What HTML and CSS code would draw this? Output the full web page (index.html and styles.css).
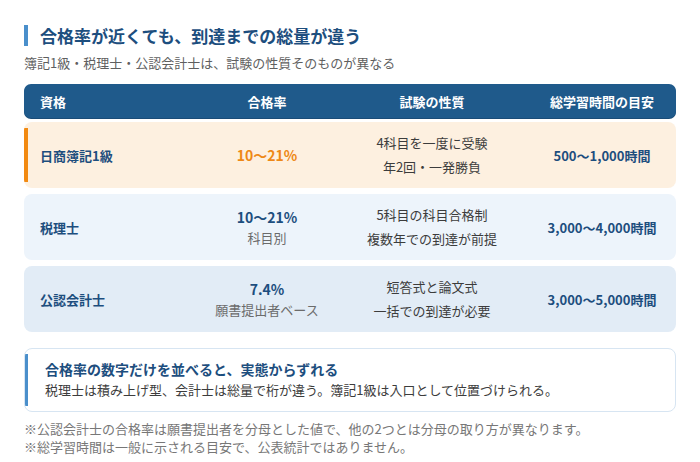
FILE: index.html
```html
<!DOCTYPE html>
<html lang="ja">
<head>
<meta charset="utf-8">
<link rel="stylesheet" href="styles.css">
</head>
<body>
<div class="page">
  <h1 class="title">合格率が近くても、到達までの総量が違う</h1>
  <p class="subtitle">簿記1級・税理士・公認会計士は、試験の性質そのものが異なる</p>

  <div class="table">
    <div class="row head">
      <div class="c1">資格</div>
      <div class="cc">合格率</div>
      <div class="cc">試験の性質</div>
      <div class="cc">総学習時間の目安</div>
    </div>
    <div class="row r1">
      <div class="c1 name">日商簿記1級</div>
      <div class="cc"><div class="val orange">10〜21%</div></div>
      <div class="cc desc">4科目を一度に受験<br>年2回・一発勝負</div>
      <div class="cc hours">500〜1,000時間</div>
    </div>
    <div class="row r2">
      <div class="c1 name">税理士</div>
      <div class="cc"><div class="val">10〜21%</div><div class="sub">科目別</div></div>
      <div class="cc desc">5科目の科目合格制<br>複数年での到達が前提</div>
      <div class="cc hours">3,000〜4,000時間</div>
    </div>
    <div class="row r3">
      <div class="c1 name">公認会計士</div>
      <div class="cc"><div class="val">7.4%</div><div class="sub">願書提出者ベース</div></div>
      <div class="cc desc">短答式と論文式<br>一括での到達が必要</div>
      <div class="cc hours">3,000〜5,000時間</div>
    </div>
  </div>

  <div class="callout">
    <div class="callout-title">合格率の数字だけを並べると、実態からずれる</div>
    <div class="callout-body">税理士は積み上げ型、会計士は総量で桁が違う。簿記1級は入口として位置づけられる。</div>
  </div>

  <div class="notes">
    <p>※公認会計士の合格率は願書提出者を分母とした値で、他の2つとは分母の取り方が異なります。</p>
    <p>※総学習時間は一般に示される目安で、公表統計ではありません。</p>
  </div>
</div>
</body>
</html>
```

FILE: styles.css
```css
* { box-sizing: border-box; }
html, body { margin: 0; padding: 0; background: #ffffff; }
body {
  font-family: "Noto Sans CJK JP", "Noto Sans", sans-serif;
  color: #333;
}
.page {
  width: 700px;
  height: 462px;
  padding: 25px 24px 0 24px;
}
.title {
  margin: 0;
  font-size: 17px;
  line-height: 21px;
  font-weight: 700;
  color: #1d4e7e;
  border-left: 4px solid #4a8fcb;
  padding-left: 12px;
}
.subtitle {
  margin: 7px 0 0 0;
  font-size: 13px;
  line-height: 20px;
  color: #5f5f5f;
}
.table {
  margin-top: 11px;
  display: flex;
  flex-direction: column;
  gap: 6px;
}
.row {
  display: grid;
  grid-template-columns: 174px 106px 224px 116px;
  align-items: center;
  padding: 0 16px;
  border-radius: 8px;
}
.head {
  height: 34px;
  background: #1f5a8b;
  color: #ffffff;
  font-size: 13px;
  font-weight: 700;
  border-radius: 7px;
  margin-bottom: -2px;
  box-shadow: 0 1px 0 #1a4c77;
}
.cc { text-align: center; }
.r1, .r2, .r3 { height: 66px; }
.r1 {
  background: linear-gradient(#f28a12, #f28a12) no-repeat left 0 top 6px / 4px calc(100% - 12px), #fdf0e0;
}
.r2 { background: #edf4fb; }
.r3 { background: #e2ecf6; }
.name {
  font-size: 13px;
  font-weight: 700;
  color: #1d4e7e;
}
.val {
  font-size: 14px;
  line-height: 20px;
  font-weight: 700;
  color: #1d4e7e;
}
.val.orange { color: #ee8816; }
.sub {
  font-size: 13px;
  line-height: 21px;
  color: #6b6b6b;
}
.desc {
  font-size: 13px;
  line-height: 24px;
  color: #3c3c3c;
}
.hours {
  font-size: 13px;
  font-weight: 700;
  color: #1d4e7e;
  white-space: nowrap;
}
.callout {
  margin-top: 16px;
  border: 1px solid #d7e5f2;
  border-radius: 8px;
  padding: 10px 16px 10px 20px;
  background: linear-gradient(#4a8fcb, #4a8fcb) no-repeat left 0 top 6px / 4px calc(100% - 12px), #ffffff;
  background-origin: border-box;
}
.callout-title {
  font-size: 14px;
  line-height: 20px;
  font-weight: 700;
  color: #1d4e7e;
}
.callout-body {
  font-size: 13px;
  line-height: 22px;
  color: #3c3c3c;
}
.notes {
  margin-top: 8px;
}
.notes p {
  margin: 0;
  font-size: 13px;
  line-height: 18px;
  color: #777777;
}
```
